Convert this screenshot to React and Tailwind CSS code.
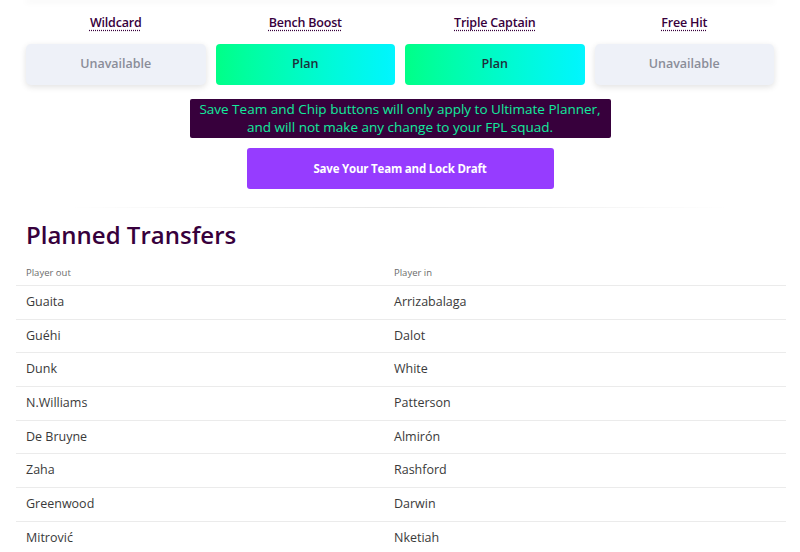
const CHIPS = [
  { name: 'Wildcard', available: false },
  { name: 'Bench Boost', available: true },
  { name: 'Triple Captain', available: true },
  { name: 'Free Hit', available: false },
]

const TRANSFERS = [
  ['Guaita', 'Arrizabalaga'],
  ['Guéhi', 'Dalot'],
  ['Dunk', 'White'],
  ['N.Williams', 'Patterson'],
  ['De Bruyne', 'Almirón'],
  ['Zaha', 'Rashford'],
  ['Greenwood', 'Darwin'],
  ['Mitrović', 'Nketiah'],
]

export default function App() {
  return (
    <div className="w-[800px] h-[552px] overflow-hidden bg-white text-[#37003c] font-['Open_Sans','Noto_Sans',sans-serif]">
      {/* tail of the card above */}
      <div className="mx-[25px] h-[2px] -mt-[2px] shadow-[0_2px_6px_rgba(0,0,0,0.07)]" />

      {/* Chips */}
      <div className="grid grid-cols-4 gap-[10px] px-[26px] pt-[15px]">
        {CHIPS.map(chip => (
          <div key={chip.name} className="flex flex-col items-center">
            <span className="text-[12.5px] leading-[16px] font-semibold tracking-[-0.2px] underline decoration-dotted decoration-[#37003c] underline-offset-[3px]">
              {chip.name}
            </span>
            {chip.available ? (
              <button className="mt-[13px] w-full h-[41px] rounded-[4px] bg-gradient-to-r from-[#00ff87] to-[#04f5ff] text-[12.5px] font-semibold text-[#1e2d3a]">
                Plan
              </button>
            ) : (
              <button className="mt-[13px] w-full h-[41px] rounded-[5px] bg-[#eef1f8] text-[12.5px] font-semibold text-[#8a8d98] shadow-[0_2px_6px_rgba(0,0,0,0.12)]">
                Unavailable
              </button>
            )}
          </div>
        ))}
      </div>

      {/* Notice + save */}
      <div className="flex flex-col items-center">
        <p className="mt-[14px] w-[421px] h-[39px] rounded-[2px] bg-[#37003c] pt-[1px] text-center text-[13.5px] leading-[18px] text-[#12eb9c]">
          Save Team and Chip buttons will only apply to Ultimate Planner,
          <br />
          and will not make any change to your FPL squad.
        </p>
        <button className="mt-[10px] w-[307px] h-[41px] rounded-[3px] bg-[#963cff] text-white text-[11.5px] font-bold tracking-[-0.2px]">
          Save Your Team and Lock Draft
        </button>
      </div>

      <div className="mt-[18px] mx-[70px] h-px bg-gradient-to-r from-transparent via-[#e6e6e6] to-transparent" />

      {/* Planned transfers */}
      <h2 className="mt-[12px] ml-[26px] text-[24px] leading-[30px] font-semibold text-[#37003c]">
        Planned Transfers
      </h2>

      <table className="mt-[17px] ml-[16px] w-[770px] border-collapse text-left">
        <thead>
          <tr className="border-b border-[#ebebeb]">
            <th className="w-[368px] pl-[10px] pb-[6px] text-[9.5px] leading-[12px] font-normal text-[#6b6b6b]">Player out</th>
            <th className="pl-[10px] pb-[6px] text-[9.5px] leading-[12px] font-normal text-[#6b6b6b]">Player in</th>
          </tr>
        </thead>
        <tbody>
          {TRANSFERS.map(([out, inn]) => (
            <tr key={out} className="border-b border-[#ebebeb] h-[33.7px]">
              <td className="pl-[10px] text-[12.5px] text-[#3a3a3a]">{out}</td>
              <td className="pl-[10px] text-[12.5px] text-[#3a3a3a]">{inn}</td>
            </tr>
          ))}
        </tbody>
      </table>
    </div>
  )
}
